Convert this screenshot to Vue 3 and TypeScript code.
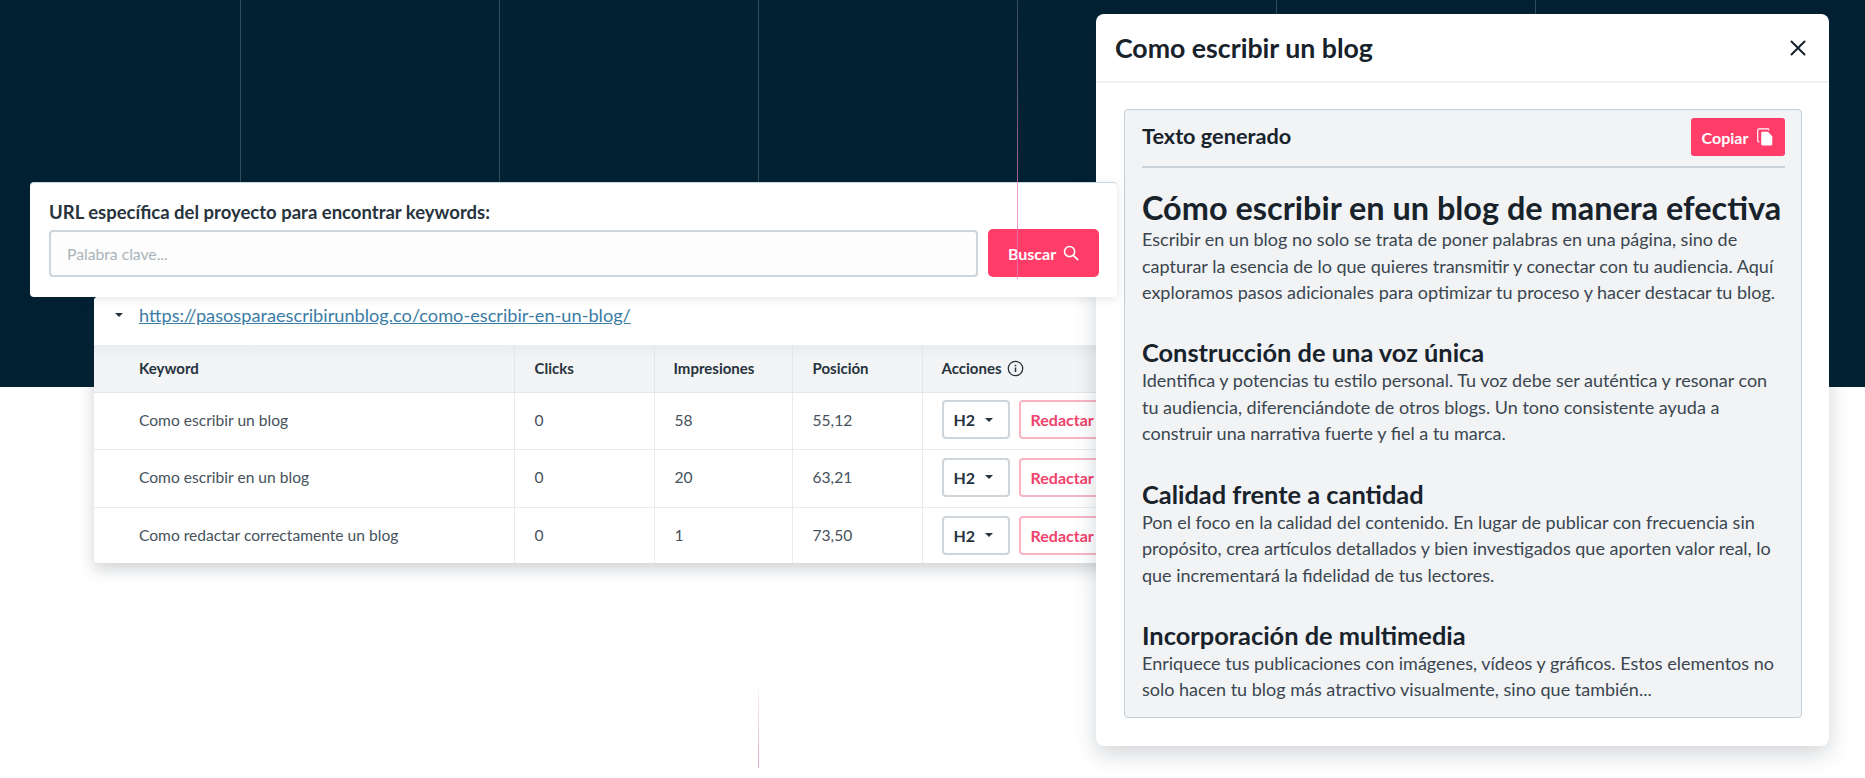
<script setup lang="ts">
interface Row {
  keyword: string
  clicks: number
  impressions: number
  position: string
}

interface Section {
  title: string
  lines: string[]
}

const rows: Row[] = [
  { keyword: 'Como escribir un blog', clicks: 0, impressions: 58, position: '55,12' },
  { keyword: 'Como escribir en un blog', clicks: 0, impressions: 20, position: '63,21' },
  { keyword: 'Como redactar correctamente un blog', clicks: 0, impressions: 1, position: '73,50' }
]

const sections: Section[] = [
  {
    title: 'Construcción de una voz única',
    lines: [
      'Identifica y potencias tu estilo personal. Tu voz debe ser auténtica y resonar con',
      'tu audiencia, diferenciándote de otros blogs. Un tono consistente ayuda a',
      'construir una narrativa fuerte y fiel a tu marca.'
    ]
  },
  {
    title: 'Calidad frente a cantidad',
    lines: [
      'Pon el foco en la calidad del contenido. En lugar de publicar con frecuencia sin',
      'propósito, crea artículos detallados y bien investigados que aporten valor real, lo',
      'que incrementará la fidelidad de tus lectores.'
    ]
  },
  {
    title: 'Incorporación de multimedia',
    lines: [
      'Enriquece tus publicaciones con imágenes, vídeos y gráficos. Estos elementos no',
      'solo hacen tu blog más atractivo visualmente, sino que también...'
    ]
  }
]

const intro: string[] = [
  'Escribir en un blog no solo se trata de poner palabras en una página, sino de',
  'capturar la esencia de lo que quieres transmitir y conectar con tu audiencia. Aquí',
  'exploramos pasos adicionales para optimizar tu proceso y hacer destacar tu blog.'
]

const gridLines = [240, 499, 758, 1276, 1535]
</script>

<template>
  <div class="page">
    <div class="hero"></div>

    <!-- líneas decorativas -->
    <i v-for="x in gridLines" :key="x" class="grid-line" :style="{ left: x + 'px' }"></i>

    <!-- tabla de keywords -->
    <section class="table-card">
      <div class="url-row">
        <span class="caret"></span>
        <a class="url" href="#">https://pasosparaescribirunblog.co/como-escribir-en-un-blog/</a>
      </div>
      <table>
        <thead>
          <tr>
            <th class="col-keyword">Keyword</th>
            <th class="col-clicks">Clicks</th>
            <th class="col-impr">Impresiones</th>
            <th class="col-pos">Posición</th>
            <th class="col-actions">
              <span class="actions-head">
                Acciones
                <svg width="17" height="17" viewBox="0 0 17 17" fill="none" stroke="#27333d" stroke-width="1.3">
                  <circle cx="8.5" cy="8.5" r="7.2" />
                  <path d="M8.5 7.6v4.4" stroke-width="1.5" />
                  <path d="M8.5 4.8v1.4" stroke-width="1.5" />
                </svg>
              </span>
            </th>
          </tr>
        </thead>
        <tbody>
          <tr v-for="row in rows" :key="row.keyword">
            <td>{{ row.keyword }}</td>
            <td>{{ row.clicks }}</td>
            <td>{{ row.impressions }}</td>
            <td>{{ row.position }}</td>
            <td class="col-actions">
              <div class="actions">
                <button class="select-btn">H2 <span class="caret dark"></span></button>
                <button class="write-btn">Redactar</button>
              </div>
            </td>
          </tr>
        </tbody>
      </table>
    </section>

    <!-- modal -->
    <section class="modal">
      <header class="modal-head">
        <h3>Como escribir un blog</h3>
        <svg width="18" height="18" viewBox="0 0 18 18" stroke="#18222b" stroke-width="2" stroke-linecap="round">
          <path d="M2.5 2.5l13 13M15.5 2.5l-13 13" />
        </svg>
      </header>
      <div class="modal-body">
        <div class="panel">
          <div class="panel-head">
            <span class="panel-title">Texto generado</span>
            <button class="copy-btn">
              Copiar
              <svg width="16" height="18" viewBox="0 0 17 19" fill="none">
                <path d="M12.5 2.2V1.6A.9.9 0 0 0 11.6.8H2A1.2 1.2 0 0 0 .8 2v11.6c0 .6.4 1 1 1h.7" stroke="#fff" stroke-width="1.3" />
                <path d="M4.5 5.2c0-.7.5-1.2 1.2-1.2h6l4.5 4.6v8.7c0 .7-.5 1.2-1.2 1.2H5.7c-.7 0-1.2-.5-1.2-1.2z" fill="#fff" />
              </svg>
            </button>
          </div>
          <h1>Cómo escribir en un blog de manera efectiva</h1>
          <p><span v-for="line in intro" :key="line" class="line">{{ line }}</span></p>
          <template v-for="section in sections" :key="section.title">
            <h2>{{ section.title }}</h2>
            <p><span v-for="line in section.lines" :key="line" class="line">{{ line }}</span></p>
          </template>
        </div>
      </div>
    </section>

    <!-- buscador -->
    <section class="search-card">
      <label class="search-label">URL específica del proyecto para encontrar keywords:</label>
      <div class="search-row">
        <input class="search-input" placeholder="Palabra clave..." />
        <button class="search-btn">
          Buscar
          <svg width="16" height="16" viewBox="0 0 17 17" fill="none" stroke="#fff" stroke-width="1.7" stroke-linecap="round">
            <circle cx="7" cy="7" r="5.4" />
            <path d="M11 11l4.6 4.6" />
          </svg>
        </button>
      </div>
    </section>

    <i class="pink-line top"></i>
    <i class="pink-line bottom"></i>
  </div>
</template>

<style>
html,
body {
  margin: 0;
  background: #fff;
}
</style>

<style scoped>
.page {
  position: relative;
  width: 1865px;
  height: 778px;
  overflow: hidden;
  background: #fff;
  font-family: Lato, "Noto Sans", sans-serif;
  color: #27333d;
}

.hero {
  height: 387px;
  background: #022133;
}

.grid-line {
  position: absolute;
  top: 0;
  width: 1px;
  height: 387px;
  background: rgba(255, 255, 255, 0.2);
}

.pink-line {
  position: absolute;
  width: 1px;
  z-index: 6;
}

.pink-line.top {
  left: 1017px;
  top: 0;
  height: 279px;
  background: linear-gradient(180deg, rgba(255, 255, 255, 0.2) 0%, rgba(228, 120, 190, 0.75) 70%, rgba(228, 120, 190, 0.8) 100%);
}

.pink-line.bottom {
  left: 758px;
  top: 688px;
  height: 80px;
  background: linear-gradient(180deg, rgba(230, 150, 195, 0.1), #e5a6c9);
}

/* Buscador */
.search-card {
  position: absolute;
  left: 30px;
  top: 182px;
  width: 1087px;
  height: 115px;
  box-sizing: border-box;
  padding: 18px 18px 0 19px;
  background: #fff;
  border-top: 1px solid #c9d6df;
  border-radius: 4px;
  box-shadow: 0 2px 10px rgba(30, 45, 60, 0.12);
  z-index: 5;
}

.search-label {
  display: block;
  font-size: 18.5px;
  line-height: 22px;
  font-weight: 700;
  color: #27333d;
}

.search-row {
  display: flex;
  gap: 10px;
  margin-top: 7px;
}

.search-input {
  flex: 1;
  min-width: 0;
  height: 47px;
  box-sizing: border-box;
  padding: 0 16px;
  border: 2px solid #ced6db;
  border-radius: 4px;
  background: #fdfdfd;
  font: 15.7px Lato, sans-serif;
  outline: none;
}

.search-input::placeholder {
  color: #a9b4bb;
}

.search-btn {
  display: flex;
  flex: none;
  align-items: center;
  justify-content: center;
  gap: 7px;
  width: 111px;
  height: 48px;
  margin-top: -1px;
  border: none;
  border-radius: 5px;
  background: #ff3d68;
  color: #fff;
  font: 700 16px Lato, sans-serif;
}

/* Tabla */
.table-card {
  position: absolute;
  left: 94px;
  top: 297px;
  width: 1030px;
  height: 266px;
  overflow: hidden;
  background: #fff;
  border-radius: 4px;
  box-shadow: 0 6px 16px rgba(30, 45, 60, 0.22);
  z-index: 1;
}

.url-row {
  display: flex;
  align-items: center;
  gap: 16px;
  height: 48px;
  padding: 0 0 12px 21px;
  box-sizing: border-box;
  background: #fff;
}

.caret {
  display: inline-block;
  width: 0;
  height: 0;
  border-left: 4px solid transparent;
  border-right: 4px solid transparent;
  border-top: 4px solid #27333d;
}

.url {
  font-size: 18.2px;
  color: #3a7ca5;
  text-decoration: underline;
}

table {
  width: 100%;
  border-collapse: collapse;
  table-layout: fixed;
}

th {
  height: 47px;
  padding: 0 0 0 20px;
  box-sizing: border-box;
  background: linear-gradient(180deg, #e9ebed 0%, #f2f4f5 30%);
  border-left: 1px solid #e3e7ea;
  border-bottom: 1px solid #e3e7ea;
  text-align: left;
  font-size: 15px;
  font-weight: 700;
  color: #27333d;
}

th:first-child,
td:first-child {
  border-left: none;
  padding-left: 45px;
}

.col-keyword {
  width: 420px;
}

.col-clicks {
  width: 140px;
}

.col-impr {
  width: 138px;
  padding-left: 19px;
}

.col-pos {
  width: 130px;
}

td {
  height: 57.5px;
  padding: 0 0 2px 20px;
  box-sizing: border-box;
  border-left: 1px solid #e8ebed;
  border-bottom: 1px solid #e8ebed;
  font-size: 15.6px;
  color: #46525c;
}

th.col-actions,
td.col-actions {
  padding-left: 19px;
}

tr:last-child td {
  border-bottom: none;
}

.actions-head {
  display: inline-flex;
  align-items: center;
  gap: 5px;
}

.actions {
  display: flex;
  gap: 9px;
}

.select-btn,
.write-btn {
  height: 39px;
  box-sizing: border-box;
  border-radius: 4px;
  font: 700 16px Lato, sans-serif;
  background: #fff;
}

.select-btn {
  display: flex;
  flex: none;
  align-items: center;
  gap: 10px;
  width: 68px;
  padding: 0 0 0 10px;
  border: 2px solid #ced6db;
  color: #27333d;
}

.write-btn {
  flex: none;
  width: 90px;
  padding: 0 0 0 10px;
  text-align: left;
  border: 2px solid #f9b4c4;
  color: #f0426c;
}

/* Modal */
.modal {
  position: absolute;
  left: 1096px;
  top: 14px;
  width: 733px;
  height: 732px;
  background: #fff;
  border-radius: 8px;
  box-shadow: 0 8px 22px rgba(30, 45, 60, 0.2);
  z-index: 4;
}

.modal-head {
  display: flex;
  align-items: center;
  justify-content: space-between;
  height: 69px;
  box-sizing: border-box;
  padding: 1px 22px 0 19px;
  border-bottom: 2px solid #eff2f3;
}

.modal-head h3 {
  margin: 0;
  font-size: 26.7px;
  font-weight: 700;
  color: #18222b;
}

.modal-body {
  padding: 26px 27px 0 28px;
}

.panel {
  height: 609px;
  box-sizing: border-box;
  padding: 9px 16.5px 0 17px;
  background: #f1f3f5;
  border: 1.5px solid #c3d0d8;
  border-radius: 4px;
}

.panel-head {
  display: flex;
  align-items: center;
  justify-content: space-between;
  height: 49px;
  box-sizing: border-box;
  padding-bottom: 11px;
  border-bottom: 2px solid #c8d3da;
}

.panel-title {
  margin-bottom: 3px;
  font-size: 21.7px;
  font-weight: 700;
  color: #18222b;
}

.copy-btn {
  display: flex;
  align-items: center;
  justify-content: center;
  gap: 9px;
  width: 94px;
  height: 38px;
  border: none;
  border-radius: 3px;
  background: #ff3d68;
  color: #fff;
  font: 700 16px Lato, sans-serif;
}

.panel h1 {
  margin: 21px 0 0;
  font-size: 32.45px;
  line-height: 37px;
  font-weight: 700;
  color: #18222b;
}

.panel h2 {
  margin: 31.5px 0 0;
  font-size: 25.4px;
  line-height: 30px;
  font-weight: 700;
  color: #18222b;
}

.panel p {
  margin: 0;
  font-size: 18px;
  line-height: 26.6px;
  color: #3b4650;
}

.line {
  display: block;
  white-space: nowrap;
}
</style>
